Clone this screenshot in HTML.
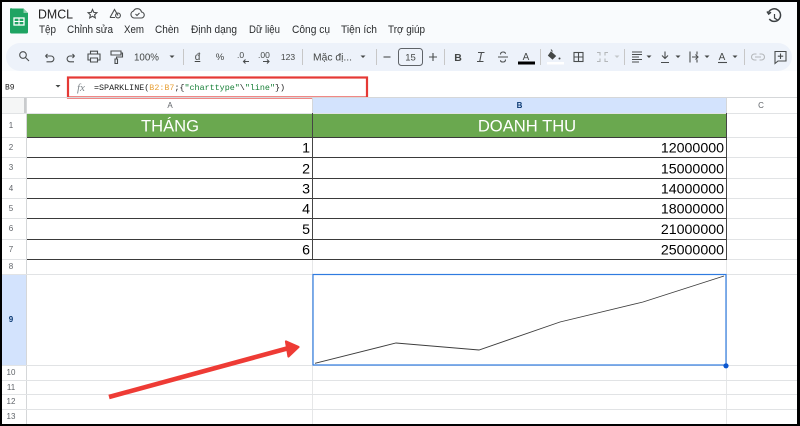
<!DOCTYPE html>
<html><head><meta charset="utf-8"><style>
html,body{margin:0;padding:0;background:#fff;width:800px;height:426px;overflow:hidden}
svg{display:block;filter:blur(.35px)}
text{font-family:"Liberation Sans",sans-serif}
.m{font-size:11.4px;fill:#2a2c2e}
.r{font-size:8px;fill:#5f6368;text-anchor:middle}
.n{font-size:14.2px;fill:#000;text-anchor:end}
.i{fill:none;stroke:#4a4d4e;stroke-width:1.1}
.l{fill:none;stroke:#b4b7ba;stroke-width:1.1}
.f{font-family:"Liberation Mono",monospace;font-size:8.4px}
</style></head><body>
<svg width="800" height="426" viewBox="0 0 800 426" xmlns="http://www.w3.org/2000/svg">
<rect width="800" height="426" fill="#fff"/>
<rect x="2" y="2" width="795" height="95" fill="#f9fbfd"/>
<rect x="2" y="71" width="795" height="26" fill="#fff"/>
<rect x="6" y="43" width="786" height="28" rx="14" fill="#edf2fa"/>

<!-- logo -->
<path d="M11.500 8.500h12l4.500 4.500v19a1.500 1.500 0 0 1-1.500 1.500h-15a1.500 1.500 0 0 1-1.500-1.500v-22.500a1.500 1.500 0 0 1 1.500-1.500z" fill="#1fa463"/>
<path d="M23.500 8.500l4.500 4.500h-4.500z" fill="#8fd1ae"/>
<rect x="14" y="18" width="10" height="7" fill="none" stroke="#fff" stroke-width="1.300"/>
<path d="M19 18v7M14 21.500h10" stroke="#fff" stroke-width="1.100"/>

<text x="38" y="18.500" font-size="12.600" fill="#1f1f1f" textLength="35" lengthAdjust="spacingAndGlyphs">DMCL</text>
<path class="i" d="M92.500 9.500l1.300 2.900 3.100.3-2.300 2.100.7 3.100-2.800-1.600-2.800 1.600.7-3.100-2.300-2.100 3.100-.3z"/>
<path class="i" d="M110 17.500l4.500-8 3.500 6M110 17.500h5"/>
<circle class="i" cx="118" cy="15.500" r="2.400"/>
<path class="i" d="M134 18h7a3 3 0 0 0 .5-6 4.300 4.300 0 0 0-8-1 3.600 3.600 0 0 0 .5 7zM135.500 14l1.500 1.500 2.500-2.500"/>

<g class="m">
<text x="39" y="33" textLength="17" lengthAdjust="spacingAndGlyphs">Tệp</text>
<text x="67" y="33" textLength="46" lengthAdjust="spacingAndGlyphs">Chỉnh sửa</text>
<text x="124" y="33" textLength="20" lengthAdjust="spacingAndGlyphs">Xem</text>
<text x="155" y="33" textLength="24" lengthAdjust="spacingAndGlyphs">Chèn</text>
<text x="191" y="33" textLength="46" lengthAdjust="spacingAndGlyphs">Định dạng</text>
<text x="249" y="33" textLength="31" lengthAdjust="spacingAndGlyphs">Dữ liệu</text>
<text x="292" y="33" textLength="38" lengthAdjust="spacingAndGlyphs">Công cụ</text>
<text x="341" y="33" textLength="36" lengthAdjust="spacingAndGlyphs">Tiện ích</text>
<text x="388" y="33" textLength="37" lengthAdjust="spacingAndGlyphs">Trợ giúp</text>
</g>

<!-- history -->
<g fill="none" stroke="#3c4043" stroke-width="1.500">
<path d="M768.500 12.500a6.300 6.300 0 1 1 .8 6.500"/>
<path d="M767 11.500l1.700 2.500 2.300-1.800"/>
<path d="M774.500 14v4l3 2" stroke-width="1.200"/>
</g>

<!-- toolbar icons -->
<circle class="i" cx="23" cy="55" r="3.300"/><path class="i" d="M25.500 57.500l3.500 3.500" stroke-width="1.300"/>
<path class="i" d="M45.500 56h5.500a2.800 2.800 0 0 1 0 5.800h-4.500M45.500 56l2-2M45.500 56l2 2"/>
<path class="i" d="M74.500 56h-4.500a2.800 2.800 0 0 0 0 5.800h4M74.500 56l-2-2M74.500 56l-2 2"/>
<path class="i" d="M90.500 54v-2.800h7v2.800M90.500 60h-2.500v-6h12v6h-2.500M90.500 58h7v4h-7z"/>
<path class="i" d="M111 51h10v4h-10zM121 53h1.500v4h-6v2M115 59h2.500v4.500h-2.500z"/>
<text x="134" y="60.500" font-size="10.500" fill="#444746" textLength="25" lengthAdjust="spacingAndGlyphs">100%</text>
<path d="M169.500 55.500h5l-2.500 2.500z" fill="#444746"/>
<path d="M183.500 49v16M302.500 49v16M376.500 49v16M444.500 49v16M540.500 49v16M624.500 49v16M744.500 49v16" stroke="#c7c7c7"/>
<text x="197.500" y="60" font-size="10" fill="#444746" text-anchor="middle" text-decoration="underline">đ</text>
<text x="220" y="60" font-size="9.500" fill="#444746" text-anchor="middle">%</text>
<text x="237" y="58" font-size="8.500" fill="#444746">.0</text>
<path class="i" d="M249 61.500h-5.500M245.500 59.500l-2 2 2 2"/>
<text x="258" y="58" font-size="8.500" fill="#444746">.00</text>
<path class="i" d="M263 61.500h6M267 59.500l2 2-2 2"/>
<text x="288" y="60" font-size="8.500" fill="#444746" text-anchor="middle">123</text>
<text x="313" y="60.500" font-size="10.500" fill="#444746" textLength="39" lengthAdjust="spacingAndGlyphs">Mặc đị...</text>
<path d="M360.500 55.500h5l-2.500 2.500z" fill="#444746"/>
<path class="i" d="M383.500 57h7"/>
<rect x="398.500" y="48.500" width="24" height="17" rx="3" fill="none" stroke="#5f6368"/>
<text x="410.500" y="60.500" font-size="9.500" fill="#444746" text-anchor="middle">15</text>
<path class="i" d="M429 57h8M433 53v8"/>
<text x="458" y="61" font-size="10.500" fill="#444746" font-weight="bold" text-anchor="middle">B</text>
<path class="i" d="M478 52.500h6.500M477 61.500h6.500M481.500 52.500l-1.800 9" stroke-width="1.400"/>
<path class="i" d="M498 57h10M500.500 54.500q0-2.500 2.500-2.500t2.500 1.800M505.500 59.500q0 2.500-2.500 2.500t-2.500-1.800"/>
<text x="526" y="60" font-size="10" fill="#444746" text-anchor="middle">A</text>
<rect x="518" y="61.500" width="17" height="3" fill="#000"/>
<path d="M551 52l4.500 4-3 3-4-3.500zM551 49.500l1.500 2" fill="#444746" stroke="#444746"/>
<circle cx="559.500" cy="58.500" r="1" fill="#444746"/>
<rect x="547" y="62" width="17" height="2.500" fill="#fff"/>
<rect x="574" y="52.500" width="9" height="9" class="i"/><path class="i" d="M578.500 52.500v9M574 57h9"/>
<path class="l" d="M597 52.500h3v3M597 61.500h3v-3M608 52.500h-3v3M608 61.500h-3v-3"/>
<path d="M614.500 55.500h5l-2.500 2.500z" fill="#c4c7c9"/>
<path class="i" d="M632 52h10M632 54.500h10M632 57h7M632 59.500h10M632 62h7" stroke-width="1"/>
<path d="M646.500 55.500h5l-2.500 2.500z" fill="#444746"/>
<path class="i" d="M665 51.500v7M662 55.500l3 3 3-3M661 62.500h8"/>
<path d="M675.500 55.500h5l-2.500 2.500z" fill="#444746"/>
<path class="i" d="M690 51.500v11M697 51.500v3M697 59.500v3M692 57h6M695.500 54.500l2.500 2.500-2.500 2.500"/>
<path d="M704.500 55.500h5l-2.500 2.500z" fill="#444746"/>
<text x="722" y="60" font-size="10" fill="#444746" text-anchor="middle">A</text>
<path class="i" d="M718 62.500h9"/>
<path d="M732.500 55.500h5l-2.500 2.500z" fill="#444746"/>
<path class="l" d="M756.500 54h-2a3 3 0 0 0 0 6h2M759.500 54h2a3 3 0 0 1 0 6h-2M755 57h6"/>
<path class="i" d="M775 51.500h11v9.500h-8l-3 2.500zM780.500 53.500v5.500M777.800 56.200h5.400"/>

<!-- formula bar -->
<text x="5" y="89.500" font-size="8" fill="#1f1f1f" style="font-family:'Liberation Mono',monospace">B9</text>
<path d="M55.500 85h5l-2.500 2.500z" fill="#444746"/>
<text x="77" y="91" font-size="11" fill="#80868b" font-style="italic" style="font-family:'Liberation Serif',serif">fx</text>
<text class="f" x="94" y="90" fill="#1f1f1f">=SPARKLINE(<tspan fill="#e8a33d">B2:B7</tspan>;{<tspan fill="#188038">"charttype"</tspan>\<tspan fill="#188038">"line"</tspan>})</text>
<rect x="68" y="77.500" width="299" height="20" fill="none" stroke="#e53935" stroke-width="2.200"/>

<!-- headers -->
<rect x="2" y="97" width="24" height="16" fill="#f5f6f6"/>
<rect x="24" y="97" width="2.500" height="16" fill="#c9cbcd"/>
<rect x="313" y="97" width="413" height="16" fill="#d3e3fd"/>
<rect x="2" y="274" width="24.500" height="91" fill="#d3e3fd"/>
<path d="M2 97.500h795" stroke="#d5d7d9"/>
<path d="M26.500 97v327M312.500 97v16M726.500 97v16" stroke="#d5d7d9"/>
<path d="M312.500 259v165M726.500 259v165" stroke="#e6e7e8"/>
<path d="M2 113.500h795M2 137.500h24M2 157.500h24M2 178.500h24M2 198.500h24M2 218.500h24M2 239.500h24M2 259.500h24M2 274.500h795M2 365.500h795M2 380.500h795M2 394.500h795M2 409.500h795M726 137.500h71M726 157.500h71M726 178.500h71M726 198.500h71M726 218.500h71M726 239.500h71M726 259.500h71" stroke="#e1e3e5"/>
<text x="170" y="108" font-size="8" fill="#5f6368" text-anchor="middle">A</text>
<text x="519.500" y="108" font-size="8" fill="#0b3a74" text-anchor="middle" font-weight="bold">B</text>
<text x="761" y="108" font-size="8" fill="#5f6368" text-anchor="middle">C</text>
<g class="r">
<text x="11" y="128">1</text><text x="11" y="150">2</text><text x="11" y="170">3</text><text x="11" y="191">4</text><text x="11" y="211">5</text><text x="11" y="231">6</text><text x="11" y="252">7</text><text x="11" y="269">8</text>
<text x="11" y="322" font-weight="bold" style="fill:#0b3a74">9</text>
<text x="11" y="375">10</text><text x="11" y="390">11</text><text x="11" y="404">12</text><text x="11" y="419">13</text>
</g>

<!-- table -->
<rect x="27" y="114" width="699" height="23" fill="#6aa84f"/>
<text x="170" y="131.700" font-size="16.600" fill="#fff" text-anchor="middle">THÁNG</text>
<text x="527" y="131.700" font-size="16.600" fill="#fff" text-anchor="middle">DOANH THU</text>
<path d="M27 137.500h700M27 157.500h700M27 178.500h700M27 198.500h700M27 218.500h700M27 239.500h700M27 259.500h700" stroke="#3a3a3a"/>
<path d="M312.500 113v146M726.500 113v146" stroke="#454545"/>
<g class="n">
<text x="310" y="152.700">1</text><text x="310" y="173.300">2</text><text x="310" y="193.300">3</text><text x="310" y="213.700">4</text><text x="310" y="234">5</text><text x="310" y="254.300">6</text>
<text x="724" y="152.700">12000000</text><text x="724" y="173.300">15000000</text><text x="724" y="193.300">14000000</text><text x="724" y="213.700">18000000</text><text x="724" y="234">21000000</text><text x="724" y="254.300">25000000</text>
</g>

<!-- selected cell with sparkline -->
<rect x="313" y="274.500" width="413" height="90.500" fill="#fff" stroke="#2f7be0" stroke-width="1.200"/>
<polyline points="315,363.300 396,343 479,350 560,322 643,302 724,276" fill="none" stroke="#3c3c3c" stroke-width="0.900"/>
<circle cx="726" cy="365.800" r="2.600" fill="#0b57d0"/>

<!-- arrow -->
<path d="M109 397L287 348.500" stroke="#ee3b35" stroke-width="4.600" fill="none"/>
<path d="M286 341.500L298.500 347L288.500 356.500Z" fill="#ee3b35" stroke="#ee3b35" stroke-width="2.200" stroke-linejoin="round"/>

<!-- black frame -->
<path d="M0 0h800v426h-800zM2 2v422h795v-422z" fill="#000" fill-rule="evenodd"/>
</svg>
</body></html>
